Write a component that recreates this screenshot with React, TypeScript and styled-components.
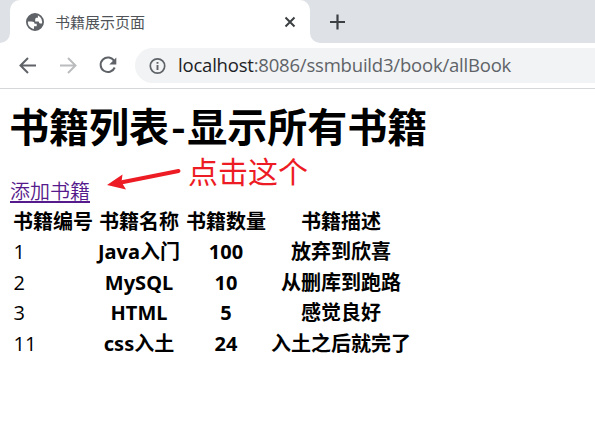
import React from "react";
import styled, { createGlobalStyle } from "styled-components";

const GlobalStyle = createGlobalStyle`
  * { box-sizing: border-box; }
  body {
    margin: 0;
    background: #fff;
    overflow: hidden;
    font-family: "Noto Sans", "Noto Sans CJK SC", sans-serif;
  }
`;

const Browser = styled.div`
  display: flex;
  flex-direction: column;
  height: 434px;
  overflow: hidden;
`;

const TabStrip = styled.div`
  display: flex;
  height: 43px;
  background: #dee1e6;
`;

const StripEdge = styled.div`
  width: 10px;
  background: #dee1e6;
  border-bottom-right-radius: 10px;
`;

const ActiveArea = styled.div`
  display: flex;
  background: linear-gradient(#dee1e6 0 50%, #fff 50%);
  width: 310px;
`;

const Tab = styled.div`
  display: flex;
  align-items: center;
  width: 300px;
  height: 43px;
  padding: 0 14px 0 16px;
  background: #fff;
  border-radius: 10px 10px 0 0;
`;

const TabTitle = styled.span`
  flex: 1;
  margin-left: 11px;
  font-family: "Noto Sans CJK SC", sans-serif;
  font-size: 15px;
  font-weight: 400;
  line-height: 24px;
  color: #505357;
`;

const StripRest = styled.div`
  flex: 1;
  display: flex;
  align-items: center;
  padding-left: 19px;
  background: #dee1e6;
  border-bottom-left-radius: 10px;
`;

const StripBack = styled.div`
  flex: 1;
  display: flex;
  background: linear-gradient(#dee1e6 0 50%, #fff 50%);
`;

const Toolbar = styled.div`
  display: flex;
  align-items: center;
  height: 46px;
  padding-left: 16px;
  border-bottom: 1px solid #d5d7da;
`;

const NavIcons = styled.div`
  display: flex;
  gap: 16px;
  width: 119px;
`;

const AddressBar = styled.div`
  display: flex;
  flex: 1;
  align-items: center;
  height: 35px;
  padding-left: 11px;
  background: #f1f3f4;
  border-radius: 18px 0 0 18px;
`;

const Address = styled.span`
  margin: -1px 0 0 9px;
  font-family: "Open Sans", "Noto Sans", sans-serif;
  font-size: 18.5px;
  line-height: 28px;
  letter-spacing: -0.2px;
  color: #5f6368;
  white-space: nowrap;
`;

const Host = styled.span`
  color: #202124;
`;

const Page = styled.main`
  position: relative;
  padding: 12px 10px 0;
`;

const Heading = styled.h1`
  margin: 1px 0 0 -1px;
  font-family: "Noto Sans CJK SC", sans-serif;
  font-size: 40px;
  line-height: 46px;
  font-weight: 700;
  color: #000;
  white-space: nowrap;
`;

const Dash = styled.span`
  margin: 0 1.5px 0 2px;
`;

const AddLink = styled.a`
  display: block;
  width: 80px;
  height: 26px;
  margin-top: 29px;
  border-bottom: 2px solid #551a8b;
  font-family: "Noto Sans CJK SC", sans-serif;
  font-size: 20px;
  font-weight: 350;
  line-height: 28px;
  color: #551a8b;
  text-decoration: none;
`;

const Table = styled.table`
  margin: 4px 0 0 0.5px;
  border-collapse: collapse;
  table-layout: fixed;
  width: 402px;
  font-size: 20px;
  line-height: 30.4px;
  color: #000;
`;

const Col = styled.col<{ $w: number }>`
  width: ${(p) => p.$w}px;
`;

const Cell = styled.th`
  height: 30.4px;
  padding: 0;
  text-align: center;
  font-weight: 700;
  white-space: nowrap;
`;

const IdCell = styled.td`
  padding: 0 0 0 3px;
  font-family: "Open Sans", sans-serif;
  font-size: 20px;
`;

const Note = styled.div`
  position: absolute;
  left: 106px;
  top: 64px;
  display: flex;
  align-items: flex-start;
  color: #ed1c24;
`;

const NoteText = styled.span`
  margin: 2px 0 0 6px;
  font-family: "Noto Sans CJK SC", sans-serif;
  font-size: 30px;
  font-weight: 400;
  line-height: 30px;
`;

const books = [
  ["1", "Java入门", "100", "放弃到欣喜"],
  ["2", "MySQL", "10", "从删库到跑路"],
  ["3", "HTML", "5", "感觉良好"],
  ["11", "css入土", "24", "入土之后就完了"],
];

const Globe = () => (
  <svg width="18" height="18" viewBox="0 0 18 18">
    <circle cx="9" cy="9" r="8.100" fill="#fff" stroke="#5f6368" strokeWidth="1.800" />
    <path
      fill="#5f6368"
      d="M9 1C5 1 1.500 4 1 8.500h4.500c2 0 3 .8 3 2.300h2.200v2.400H8V17c4.500.5 8-2.500 8.800-6.500h-2.600c-.9 0-1.400-.8-1.400-1.900H9.200V6.300c0-1 .7-1.600 1.700-1.600h1V1.700z"
    />
  </svg>
);

const Icon = ({ d, color = "#5f6368", size = 24, w = 2 }: { d: string; color?: string; size?: number; w?: number }) => (
  <svg width={size} height={size} viewBox={`0 0 ${size} ${size}`} fill="none" stroke={color} strokeWidth={w}>
    <path d={d} />
  </svg>
);

export default function App() {
  return (
    <Browser>
      <GlobalStyle />
      <TabStrip>
        <ActiveArea>
          <StripEdge />
          <Tab>
            <Globe />
            <TabTitle>书籍展示页面</TabTitle>
            <Icon size={12} color="#3c4043" d="M1.500 1.500l9 9M10.500 1.500l-9 9" />
          </Tab>
        </ActiveArea>
        <StripBack>
          <StripRest>
            <Icon size={16} color="#3c4043" w={2.2} d="M8.500 .5v15M1 8h15" />
          </StripRest>
        </StripBack>
      </TabStrip>
      <Toolbar>
        <NavIcons>
          <Icon d="M20 11.500H5M12 4L4.500 11.500l7.500 7.500" />
          <Icon color="#babcbe" d="M4 11.500h15M12 4l7.500 7.500-7.500 7.500" />
          <svg width="24" height="24" viewBox="0 0 24 24">
            <path d="M18.200 7A7.300 7.300 0 1 0 18.700 13.500" fill="none" stroke="#5f6368" strokeWidth="2" />
            <path d="M20.300 3.500v7h-7z" fill="#5f6368" />
          </svg>
        </NavIcons>
        <AddressBar>
          <svg width="23" height="18" viewBox="0 0 23 18">
            <circle cx="11.500" cy="9" r="7.200" fill="none" stroke="#5f6368" strokeWidth="1.700" />
            <path d="M11.500 8v5M11.500 5v1.800" stroke="#5f6368" strokeWidth="1.900" />
          </svg>
          <Address>
            <Host>localhost</Host>:8086/ssmbuild3/book/allBook
          </Address>
        </AddressBar>
      </Toolbar>
      <Page>
        <Heading>
          书籍列表<Dash>-</Dash>显示所有书籍
        </Heading>
        <AddLink href="#">添加书籍</AddLink>
        <Table>
          <colgroup>
            <Col $w={85} />
            <Col $w={87} />
            <Col $w={87} />
            <Col $w={143} />
          </colgroup>
          <thead>
            <tr>
              {["书籍编号", "书籍名称", "书籍数量", "书籍描述"].map((t) => (
                <Cell key={t}>{t}</Cell>
              ))}
            </tr>
          </thead>
          <tbody>
            {books.map(([id, name, count, detail]) => (
              <tr key={id}>
                <IdCell>{id}</IdCell>
                <Cell>{name}</Cell>
                <Cell>{count}</Cell>
                <Cell>{detail}</Cell>
              </tr>
            ))}
          </tbody>
        </Table>
        <Note>
          <svg width="76" height="40" viewBox="0 0 76 40">
            <path d="M72.500 18L16 29.300" stroke="#ed1c24" strokeWidth="4" strokeLinecap="round" />
            <path d="M1 32L16.500 21.500l-1 7.500 4.500 7.500z" fill="#ed1c24" />
          </svg>
          <NoteText>点击这个</NoteText>
        </Note>
      </Page>
    </Browser>
  );
}
